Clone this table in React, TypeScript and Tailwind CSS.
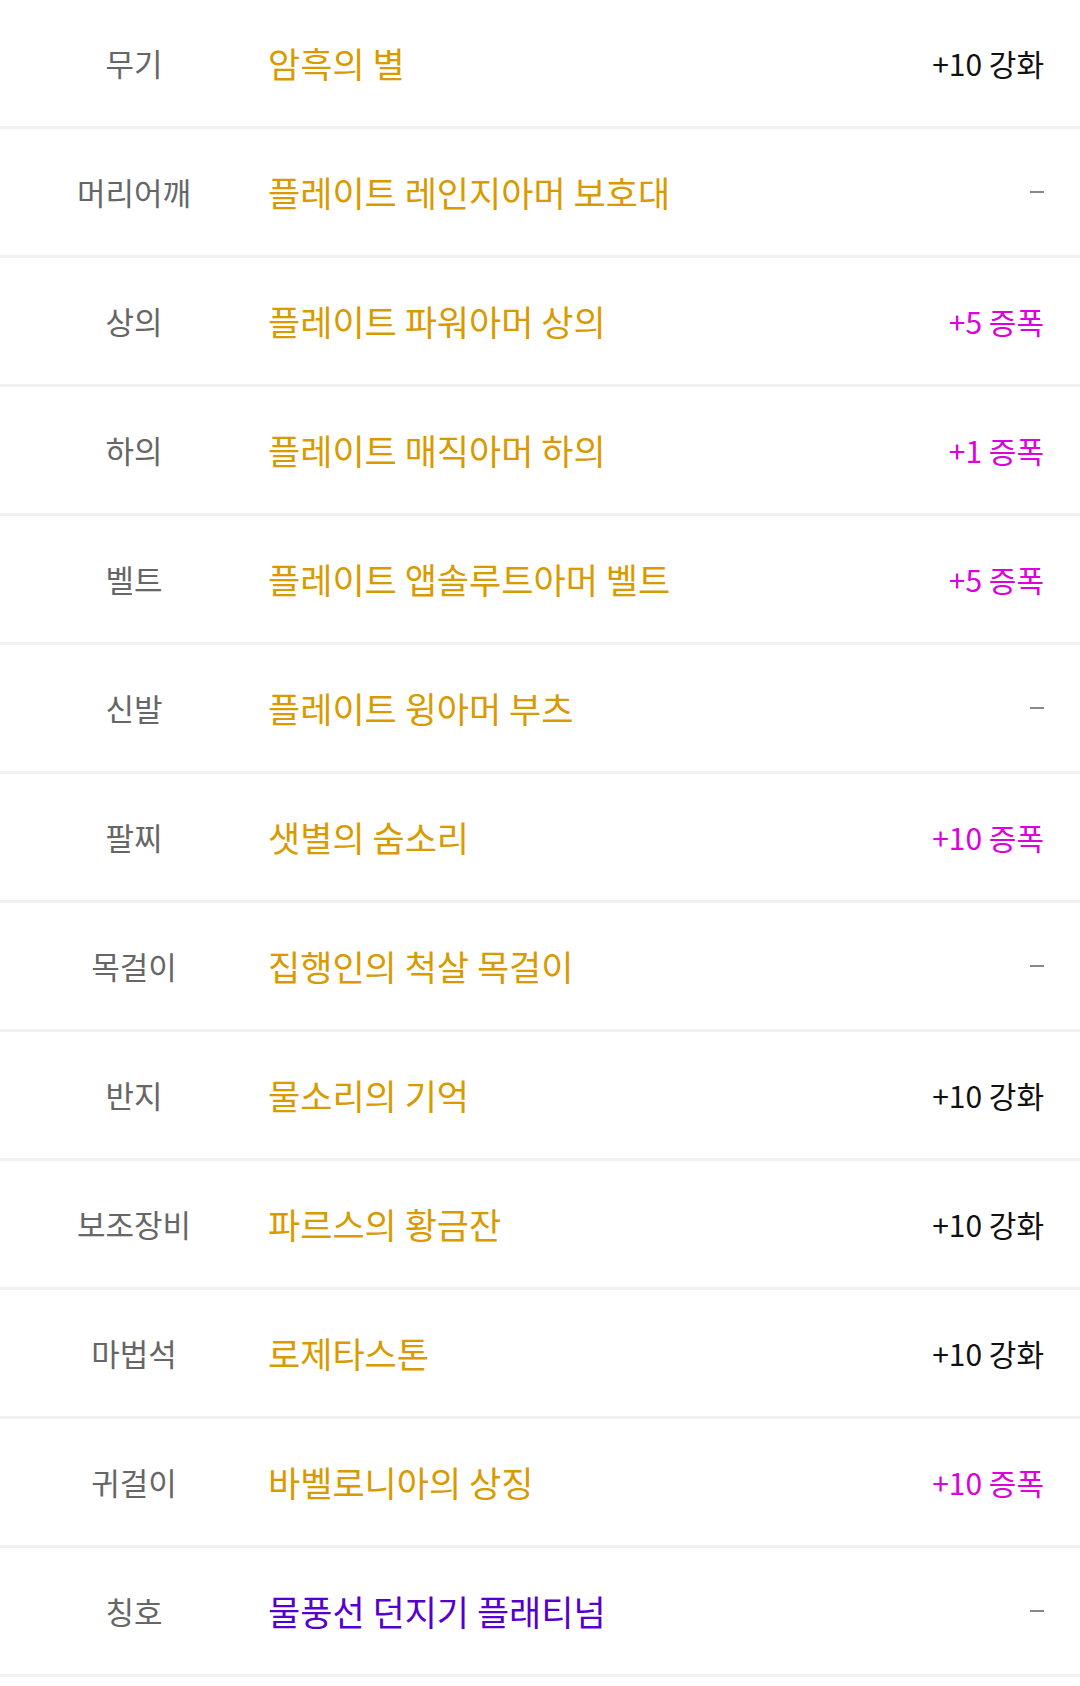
const rows: { label: string; name: string; nameColor: string; right: string; rightKind: "enh" | "amp" | "none" }[] = [
  { label: "무기", name: "암흑의 별", nameColor: "gold", right: "+10 강화", rightKind: "enh" },
  { label: "머리어깨", name: "플레이트 레인지아머 보호대", nameColor: "gold", right: "-", rightKind: "none" },
  { label: "상의", name: "플레이트 파워아머 상의", nameColor: "gold", right: "+5 증폭", rightKind: "amp" },
  { label: "하의", name: "플레이트 매직아머 하의", nameColor: "gold", right: "+1 증폭", rightKind: "amp" },
  { label: "벨트", name: "플레이트 앱솔루트아머 벨트", nameColor: "gold", right: "+5 증폭", rightKind: "amp" },
  { label: "신발", name: "플레이트 윙아머 부츠", nameColor: "gold", right: "-", rightKind: "none" },
  { label: "팔찌", name: "샛별의 숨소리", nameColor: "gold", right: "+10 증폭", rightKind: "amp" },
  { label: "목걸이", name: "집행인의 척살 목걸이", nameColor: "gold", right: "-", rightKind: "none" },
  { label: "반지", name: "물소리의 기억", nameColor: "gold", right: "+10 강화", rightKind: "enh" },
  { label: "보조장비", name: "파르스의 황금잔", nameColor: "gold", right: "+10 강화", rightKind: "enh" },
  { label: "마법석", name: "로제타스톤", nameColor: "gold", right: "+10 강화", rightKind: "enh" },
  { label: "귀걸이", name: "바벨로니아의 상징", nameColor: "gold", right: "+10 증폭", rightKind: "amp" },
  { label: "칭호", name: "물풍선 던지기 플래티넘", nameColor: "purple", right: "-", rightKind: "none" },
];

export default function App() {
  return (
    <div className="w-[1080px] bg-white font-['Noto_Sans_CJK_KR','Noto_Sans',sans-serif]">
      {rows.map((r) => (
        <div key={r.label} className="flex h-[129px] items-center border-b-[3px] border-[#f1f1f1] pr-[36px]">
          <div className="w-[268px] shrink-0 text-center text-[31px] text-[#666666]">{r.label}</div>
          <div className={"flex-1 text-[35px] " + (r.nameColor === "purple" ? "text-[#5500cc]" : "text-[#d99a00]")}>
            {r.name}
          </div>
          {r.rightKind === "none" ? (
            <div className="h-[2px] w-[14px] bg-[#888888]" />
          ) : (
            <div className={"text-[30px] " + (r.rightKind === "amp" ? "text-[#dd00dd]" : "text-[#111111]")}>
              {r.right}
            </div>
          )}
        </div>
      ))}
    </div>
  );
}
